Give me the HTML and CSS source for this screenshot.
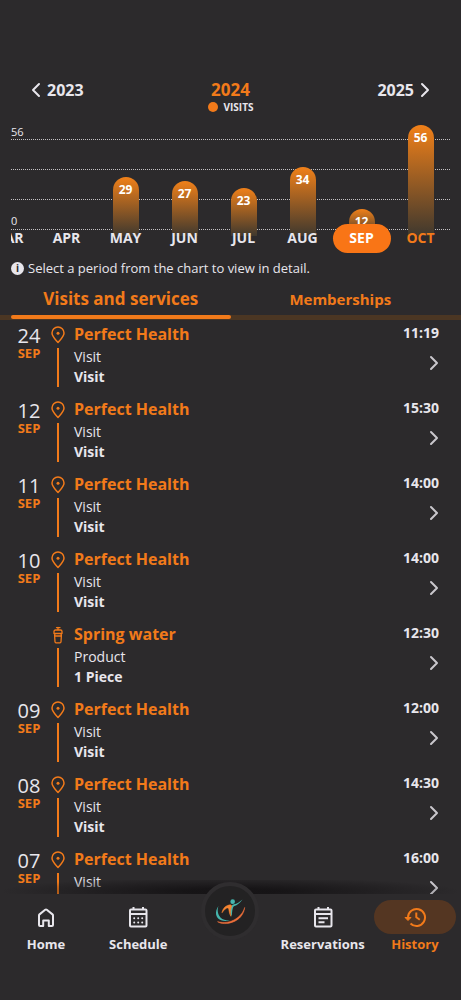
FILE: index.html
```html
<!DOCTYPE html>
<html lang="en">
<head>
<meta charset="utf-8">
<meta name="viewport" content="width=device-width, initial-scale=1">
<title>History</title>
<link rel="stylesheet" href="styles.css">
</head>
<body>

<!-- shared icons -->
<svg class="sprite" aria-hidden="true">
  <symbol id="chevron" viewBox="0 0 10 16"><path d="M2 2l6 6-6 6" fill="none" stroke="currentColor" stroke-width="2" stroke-linecap="round" stroke-linejoin="round"/></symbol>
  <symbol id="pin" viewBox="0 0 16 18"><path d="M8 16.500C5.500 13.500 2 10.500 2 7a6 6 0 0 1 12 0c0 3.500-3.500 6.500-6 9.500z" fill="none" stroke="currentColor" stroke-width="1.500" stroke-linejoin="round"/><circle cx="8" cy="7.200" r="1.500" fill="currentColor"/></symbol>
  <symbol id="bottle" viewBox="0 0 16 18"><path d="M8 1.500V4M6.500 1.600h3.500M5.500 4h5q1.500 0 1.500 1.500V7.500H4V5.500Q4 4 5.500 4zM5 7.500l-.4 2 .4 6.300q.1 1 1 1h4q.9 0 1-1l.4-6.300-.4-2M5 10h6" fill="none" stroke="currentColor" stroke-width="1.300" stroke-linecap="round" stroke-linejoin="round"/></symbol>
</svg>

<div class="app">
  <main class="content">
    <section class="chart">
      <div class="years">
        <button class="year" type="button"><svg class="chevron left"><use href="#chevron"/></svg>2023</button>
        <h1 class="current-year">2024</h1>
        <button class="year next" type="button">2025<svg class="chevron"><use href="#chevron"/></svg></button>
      </div>
      <div class="legend"><span class="dot"></span>VISITS</div>

      <div class="plot">
        <div class="grid"><span>56</span><span></span><span></span><span>0</span></div>
        <div class="months">
          <button class="month" type="button"><span class="track"></span><span class="name">MAR</span></button>
          <button class="month" type="button"><span class="track"></span><span class="name">APR</span></button>
          <button class="month" type="button"><span class="track"><span class="bar" style="height:53%">29</span></span><span class="name">MAY</span></button>
          <button class="month" type="button"><span class="track"><span class="bar" style="height:50%">27</span></span><span class="name">JUN</span></button>
          <button class="month" type="button"><span class="track"><span class="bar" style="height:43%">23</span></span><span class="name">JUL</span></button>
          <button class="month" type="button"><span class="track"><span class="bar" style="height:62%">34</span></span><span class="name">AUG</span></button>
          <button class="month selected" type="button"><span class="track"><span class="bar" style="height:24%">12</span></span><span class="name">SEP</span></button>
          <button class="month now" type="button"><span class="track"><span class="bar" style="height:100%">56</span></span><span class="name">OCT</span></button>
        </div>
      </div>

      <p class="hint"><span class="info">i</span>Select a period from the chart to view in detail.</p>
    </section>

    <div class="tabs" role="tablist">
      <button class="tab active" type="button" role="tab" aria-selected="true">Visits and services</button>
      <button class="tab" type="button" role="tab" aria-selected="false">Memberships</button>
    </div>

    <ul class="list">
      <li class="entry">
        <div class="date"><b>24</b>SEP</div>
        <div class="marker"><svg><use href="#pin"/></svg></div>
        <div class="info-text"><h2>Perfect Health</h2><p>Visit</p><p class="strong">Visit</p></div>
        <div class="side"><time>11:19</time><svg class="chevron"><use href="#chevron"/></svg></div>
      </li>
      <li class="entry">
        <div class="date"><b>12</b>SEP</div>
        <div class="marker"><svg><use href="#pin"/></svg></div>
        <div class="info-text"><h2>Perfect Health</h2><p>Visit</p><p class="strong">Visit</p></div>
        <div class="side"><time>15:30</time><svg class="chevron"><use href="#chevron"/></svg></div>
      </li>
      <li class="entry">
        <div class="date"><b>11</b>SEP</div>
        <div class="marker"><svg><use href="#pin"/></svg></div>
        <div class="info-text"><h2>Perfect Health</h2><p>Visit</p><p class="strong">Visit</p></div>
        <div class="side"><time>14:00</time><svg class="chevron"><use href="#chevron"/></svg></div>
      </li>
      <li class="entry">
        <div class="date"><b>10</b>SEP</div>
        <div class="marker"><svg><use href="#pin"/></svg></div>
        <div class="info-text"><h2>Perfect Health</h2><p>Visit</p><p class="strong">Visit</p></div>
        <div class="side"><time>14:00</time><svg class="chevron"><use href="#chevron"/></svg></div>
      </li>
      <li class="entry">
        <div class="date"></div>
        <div class="marker"><svg><use href="#bottle"/></svg></div>
        <div class="info-text"><h2>Spring water</h2><p>Product</p><p class="strong">1 Piece</p></div>
        <div class="side"><time>12:30</time><svg class="chevron"><use href="#chevron"/></svg></div>
      </li>
      <li class="entry">
        <div class="date"><b>09</b>SEP</div>
        <div class="marker"><svg><use href="#pin"/></svg></div>
        <div class="info-text"><h2>Perfect Health</h2><p>Visit</p><p class="strong">Visit</p></div>
        <div class="side"><time>12:00</time><svg class="chevron"><use href="#chevron"/></svg></div>
      </li>
      <li class="entry">
        <div class="date"><b>08</b>SEP</div>
        <div class="marker"><svg><use href="#pin"/></svg></div>
        <div class="info-text"><h2>Perfect Health</h2><p>Visit</p><p class="strong">Visit</p></div>
        <div class="side"><time>14:30</time><svg class="chevron"><use href="#chevron"/></svg></div>
      </li>
      <li class="entry">
        <div class="date"><b>07</b>SEP</div>
        <div class="marker"><svg><use href="#pin"/></svg></div>
        <div class="info-text"><h2>Perfect Health</h2><p>Visit</p><p class="strong">Visit</p></div>
        <div class="side"><time>16:00</time><svg class="chevron"><use href="#chevron"/></svg></div>
      </li>
    </ul>
  </main>

  <nav class="bottom-nav">
    <a class="nav-item" href="#home">
      <span class="nav-icon"><svg viewBox="0 0 24 24"><path d="M5 10.500Q5 9.800 5.500 9.400L11.200 4.800q.8-.6 1.600 0L18.500 9.400q.5.400.5 1.100V20q0 1-1 1h-3.200v-5.500h-5.600V21H6q-1 0-1-1z"/></svg></span>
      Home
    </a>
    <a class="nav-item" href="#schedule">
      <span class="nav-icon"><svg viewBox="0 0 24 24"><rect x="4" y="4.500" width="16.500" height="17" rx="1"/><path d="M4 9h16.500M7.500 2v2.500M17 2v2.500"/><path class="dots" d="M8.200 13.200h.01M12.200 13.200h.01M16.200 13.200h.01M8.200 17.500h.01M12.200 17.500h.01M16.200 17.500h.01"/></svg></span>
      Schedule
    </a>
    <a class="nav-item" href="#main" aria-label="Club">
      <span class="logo">
        <svg viewBox="0 0 36 36">
          <circle cx="21" cy="7.500" r="2.600" fill="#45b5ad"/>
          <path d="M32 5c-3 4-6 6.500-9 7.500-2 .8-2.500 4-3 11.500-1.700-3-2.500-6-1.500-9.500.5-2 2-3.500 4-4 3.500-.8 6-2.500 9.500-5.500z" fill="#45b5ad"/>
          <path d="M18.500 11c-5 .5-8.500 3.500-9.500 9 2.500-3.500 4.500-5.500 6.500-5.500 1.800 0 .8 5 3.500 9.500-.8-4-.5-8 1-12z" fill="#f58431" stroke="#f58431" stroke-width=".6"/>
          <path d="M5 12.500C.5 19 1.500 26 8 28.500c3 1.200 7 1 10 0-4 .2-8-.5-10.500-3C4 22 3.500 17 5 12.500z" fill="#45b5ad"/>
          <path d="M34.500 14C32 24 19 34 4 30c8 5.500 29 .5 30.500-16z" fill="#f0703a" stroke="#f0703a" stroke-width=".6"/>
        </svg>
      </span>
    </a>
    <a class="nav-item" href="#reservations">
      <span class="nav-icon"><svg viewBox="0 0 24 24"><rect x="4" y="4.500" width="16.500" height="17" rx="1"/><path d="M4 9h16.500M7.500 2v2.500M17 2v2.500M7.500 13.200h9.500M7.500 17.200h6"/></svg></span>
      Reservations
    </a>
    <a class="nav-item active" href="#history">
      <span class="nav-icon"><svg viewBox="0 0 24 24"><path d="M5 12.500A8.500 8.500 0 1 1 7.500 18.500M13.300 7.500V12.300l3.500 2.500"/><path d="M2 12.500h6L5 15.500z" fill="currentColor" stroke-width="1"/></svg></span>
      History
    </a>
  </nav>
</div>

</body>
</html>
```
FILE: styles.css
```css
* {
  box-sizing: border-box;
  margin: 0;
  padding: 0;
}

body {
  background: #2c2a2c;
  color: #e8e6ec;
  font-family: "Open Sans", "Noto Sans", sans-serif;
  font-size: 14px;
}

button {
  background: none;
  border: none;
  color: inherit;
  font: inherit;
  cursor: pointer;
}

a {
  color: inherit;
  text-decoration: none;
}

.sprite {
  position: absolute;
  width: 0;
  height: 0;
}

.app {
  display: flex;
  flex-direction: column;
  height: 100vh;
}

.content {
  flex: 1;
  min-height: 0;
  padding-top: 80px;
  overflow: hidden;
}

.chevron {
  width: 10px;
  height: 16px;
}

.chevron.left {
  transform: scaleX(-1);
}

/* chart */
.chart {
  padding: 0 11px;
}

.years {
  display: grid;
  grid-template-columns: 1fr auto 1fr;
  align-items: center;
  height: 20px;
  padding: 0 20px;
  line-height: 20px;
}

.year {
  display: flex;
  align-items: center;
  gap: 6px;
  font-size: 16px;
  font-weight: 700;
}

.year.next {
  justify-content: flex-end;
}

.current-year {
  color: #f27a1a;
  font-size: 17px;
  font-weight: 700;
}

.legend {
  display: flex;
  align-items: center;
  justify-content: center;
  gap: 6px;
  height: 14px;
  font-size: 10px;
  font-weight: 700;
}

.dot {
  width: 10px;
  height: 10px;
  border-radius: 50%;
  background: #f27a1a;
}

.plot {
  position: relative;
  margin-top: 11px;
  overflow: hidden;
}

/* value lines lie behind the bars */
.grid {
  position: absolute;
  inset: 0 0 auto 0;
}

.grid span {
  display: block;
  height: 30px;
  padding-top: 14px;
  border-bottom: 1px dotted #c4c2c4;
  font-size: 11px;
  line-height: 14px;
}

.grid span:first-child {
  height: 15px;
  padding-top: 0;
}

.months {
  position: relative;
  display: flex;
  justify-content: flex-end;
}

.month {
  flex: 0 0 59px;
  display: flex;
  flex-direction: column;
  align-items: center;
}

.track {
  display: flex;
  align-items: flex-end;
  height: 111px;
}

.bar {
  width: 26px;
  padding-top: 4px;
  border-radius: 13px 13px 0 0;
  background: linear-gradient(#f08019, #3f382e);
  color: #fff;
  font-size: 12px;
  font-weight: 700;
  line-height: 18px;
}

.name {
  position: relative;
  width: 58px;
  height: 29px;
  margin-top: -12px;
  border-radius: 15px;
  font-size: 14px;
  font-weight: 700;
  line-height: 28px;
}

.selected .name {
  background: #f97516;
  color: #fff;
}

.now .name {
  color: #f27a1a;
}

.hint {
  display: flex;
  align-items: center;
  gap: 4px;
  height: 30px;
  font-size: 13px;
}

.info {
  width: 13px;
  height: 13px;
  border-radius: 50%;
  background: #e8e6ec;
  color: #2c2a2c;
  font-size: 10px;
  font-weight: 700;
  line-height: 13px;
  text-align: center;
}

/* tabs */
.tabs {
  display: flex;
  height: 37px;
  padding: 0 11px;
  border-bottom: 5px solid #4b3623;
}

.tab {
  flex: 1;
  display: flex;
  flex-direction: column;
  height: 37px;
  color: #f27a1a;
  font-size: 15px;
  font-weight: 700;
  line-height: 32px;
  align-items: center;
}

.tab.active {
  font-size: 17px;
}

.tab.active::after {
  content: "";
  align-self: stretch;
  height: 4px;
  border-radius: 2px;
  background: #f27a1a;
}

/* history list */
.list {
  list-style: none;
}

.entry {
  display: grid;
  grid-template-columns: 36px 22px 1fr auto;
  height: 75px;
  padding: 4px 22px 0 11px;
}

.date {
  padding-top: 1px;
  color: #f27a1a;
  font-size: 13px;
  font-weight: 700;
  line-height: 12px;
  text-align: center;
}

.date b {
  display: block;
  color: #e8e6ec;
  font-size: 20px;
  font-weight: 400;
  line-height: 22px;
}

.marker {
  display: flex;
  flex-direction: column;
  align-items: center;
  gap: 4px;
  padding-top: 2px;
  color: #f27a1a;
}

.marker svg {
  width: 16px;
  height: 18px;
}

.marker::after {
  content: "";
  width: 2px;
  height: 39px;
  background: #f27a1a;
}

.info-text {
  padding-left: 5px;
  line-height: 20px;
}

.info-text h2 {
  margin-bottom: 3px;
  color: #f27a1a;
  font-size: 16px;
  font-weight: 700;
  line-height: 20px;
}

.strong {
  font-weight: 700;
}

.side {
  display: flex;
  flex-direction: column;
  align-items: flex-end;
  gap: 14px;
  color: #c9c7cc;
}

.side time {
  color: #e8e6ec;
  font-weight: 700;
  line-height: 17px;
}

/* bottom navigation */
.bottom-nav {
  position: relative;
  display: grid;
  grid-template-columns: repeat(5, 1fr);
  height: 106px;
  background: #2c2a2c;
}

/* shadow over the list, strongest around the logo */
.bottom-nav::before {
  content: "";
  position: absolute;
  top: -14px;
  left: 0;
  width: 100%;
  height: 14px;
  background: radial-gradient(50% 100% at 50% 80%, rgba(20, 18, 20, 0.9) 20%, transparent);
}

.nav-item {
  position: relative;
  display: flex;
  flex-direction: column;
  align-items: center;
  gap: 1px;
  padding-top: 6px;
  font-size: 13px;
  font-weight: 700;
}

.nav-icon {
  display: flex;
  align-items: center;
  justify-content: center;
  width: 82px;
  height: 34px;
  border-radius: 17px;
}

.nav-icon svg {
  width: 24px;
  height: 24px;
  fill: none;
  stroke: currentColor;
  stroke-width: 2;
  stroke-linejoin: round;
}

.nav-icon .dots {
  stroke-linecap: round;
}

.nav-item.active {
  color: #f27a1a;
}

.active .nav-icon {
  background: #543622;
}

.logo {
  display: flex;
  align-items: center;
  justify-content: center;
  width: 58px;
  height: 58px;
  margin-top: -18px;
  border: 4px solid #2f2d2f;
  border-radius: 50%;
  background: #232223;
}

.logo svg {
  width: 32px;
  height: 32px;
}
```
